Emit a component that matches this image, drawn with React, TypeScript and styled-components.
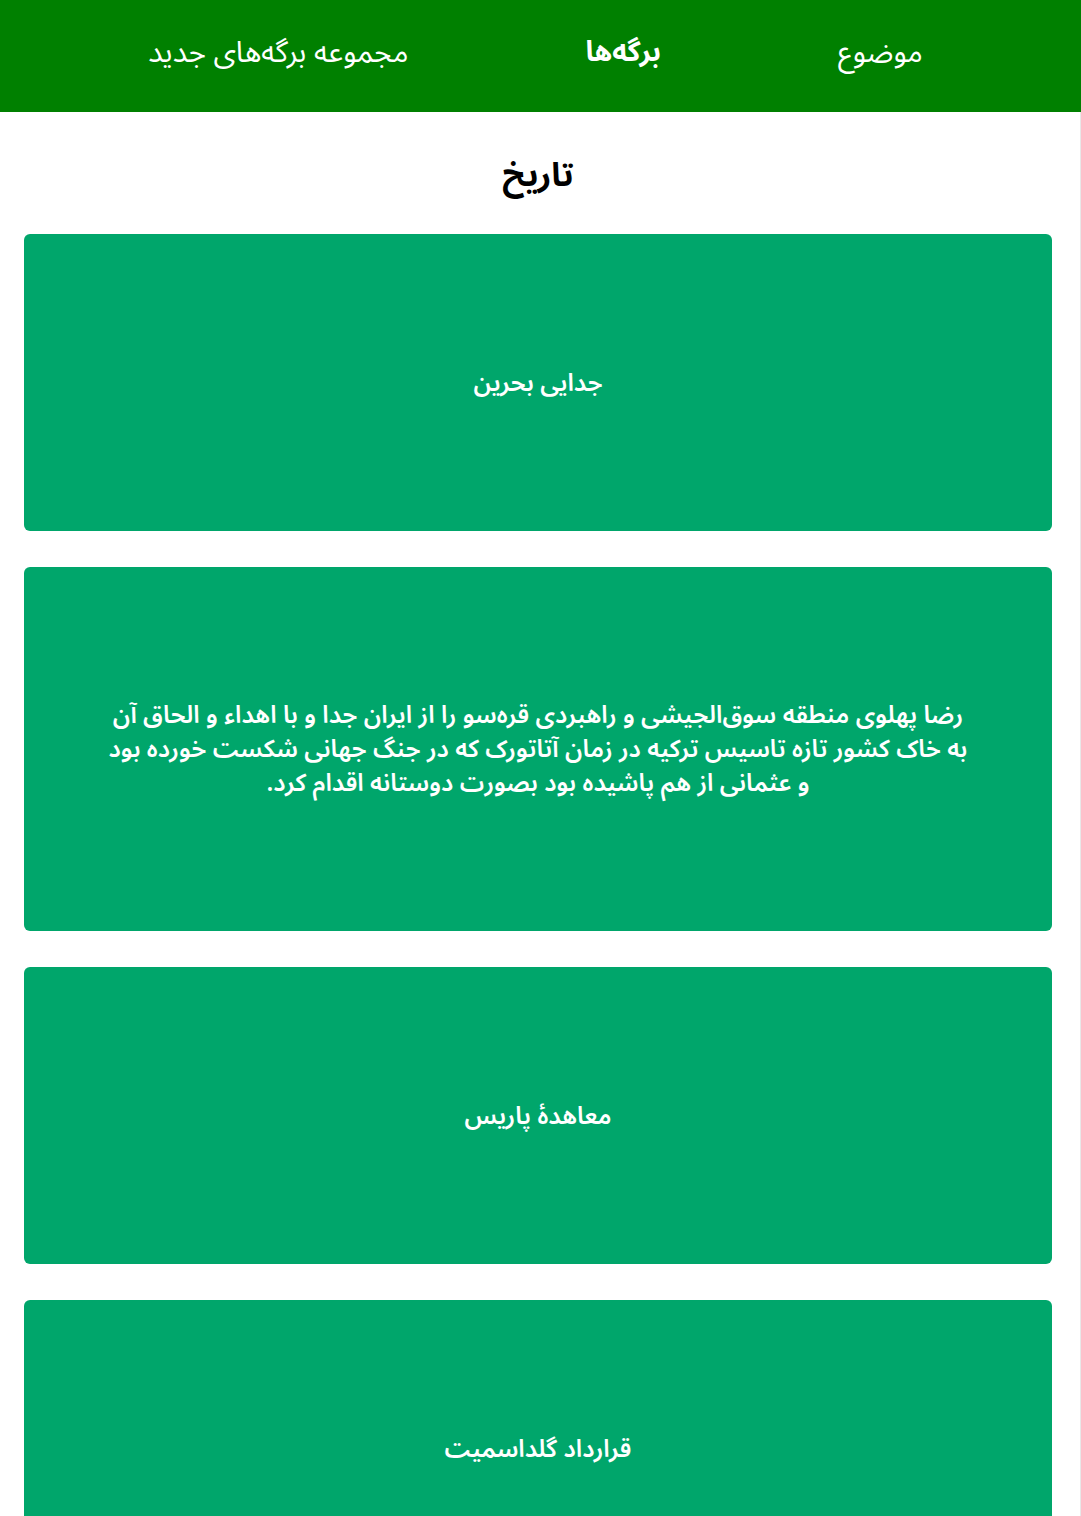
import React from "react";
import styled, { createGlobalStyle } from "styled-components";

const Global = createGlobalStyle`
  html, body { margin: 0; padding: 0; background: #ffffff; }
  body { font-family: "Noto Sans Arabic", "Noto Sans Arabic UI", "Noto Sans", "DejaVu Sans", sans-serif; direction: rtl; }
  * { box-sizing: border-box; }
`;

const Header = styled.header`
  height: 112px;
  background: #008000;
  display: flex;
  align-items: center;
  justify-content: center;
  gap: 177px;
  padding: 0 10px 8px 0;
`;

const NavItem = styled.a<{ $active?: boolean }>`
  color: #ffffff;
  font-size: ${(p) => (p.$active ? "28px" : "29.5px")};
  font-weight: ${(p) => (p.$active ? 700 : 400)};
  text-decoration: none;
  cursor: pointer;
`;

const Content = styled.div`
  width: 1080px;
  border-right: 1px solid #e8e8e8;
  padding: 0 28px 1px 23px;
`;

const Title = styled.h2`
  margin: 0;
  padding: 40px 0 34px;
  text-align: center;
  font-size: 33px;
  font-weight: 700;
  line-height: 48px;
  color: #000;
`;

const CardList = styled.div`
  display: flex;
  flex-direction: column;
  gap: 36px;
`;

const Card = styled.div`
  background: #00a66b;
  border-radius: 6px;
  padding: 131px 78px;
  color: #ffffff;
  font-size: 24.5px;
  font-weight: 600;
  line-height: 34px;
  text-align: center;
  min-height: 297px;
  display: flex;
  align-items: center;
  justify-content: center;
`;

const cards = [
  "جدایی بحرین",
  "رضا پهلوی منطقه سوق‌الجیشی و راهبردی قره‌سو را از ایران جدا و با اهداء و الحاق آن به خاک کشور تازه تاسیس ترکیه در زمان آتاتورک که در جنگ جهانی شکست خورده بود و عثمانی از هم پاشیده بود بصورت دوستانه اقدام کرد.",
  "معاهدهٔ پاریس",
  "قرارداد گلداسمیت",
];

export default function App() {
  return (
    <>
      <Global />
      <Header>
        <NavItem>موضوع</NavItem>
        <NavItem $active>برگه‌ها</NavItem>
        <NavItem>مجموعه برگه‌های جدید</NavItem>
      </Header>
      <Content>
        <Title>تاریخ</Title>
        <CardList>
          {cards.map((c, i) => (
            <Card key={i}>{c}</Card>
          ))}
        </CardList>
      </Content>
    </>
  );
}
